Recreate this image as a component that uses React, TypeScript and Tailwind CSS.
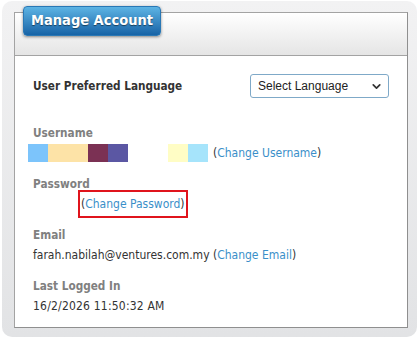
import { ChevronDown } from "lucide-react";

const blocks = [
  { w: "w-[20px]", c: "bg-[#7cc4fb]" },
  { w: "w-[40px]", c: "bg-[#fde3a7]" },
  { w: "w-[20px]", c: "bg-[#7b3154]" },
  { w: "w-[20px]", c: "bg-[#5b57a3]" },
  { w: "w-[40px]", c: "bg-white" },
  { w: "w-[20px]", c: "bg-[#fffdc5]" },
  { w: "w-[20px]", c: "bg-[#a6e4fb]" },
];

function Label({ children }: { children: React.ReactNode }) {
  return <div className="h-[20px] leading-[20px] text-[11.7px] font-bold text-[#808080]">{children}</div>;
}

function Link({ children }: { children: React.ReactNode }) {
  return <span className="text-[#3a8fc9]">{children}</span>;
}

export default function App() {
  return (
    <div className="w-[419px] h-[338px] bg-white pt-[1px] pl-[2px] pr-[2px] pb-[1px]" style={{ fontFamily: '"DejaVu Sans Condensed", "DejaVu Sans", Verdana, sans-serif' }}>
      <div className="h-full rounded-[10px] bg-gradient-to-b from-[#f2f2f3] to-[#e2e3e5] pt-[11px] pl-[12px] pr-[9px] pb-[9px]">
        <div className="h-full flex flex-col border border-[#a3a3a3] border-r-[#8f8f8f] border-b-[#8f8f8f] bg-white">
          <div className="h-[43px] shrink-0 bg-gradient-to-b from-white to-[#e5e5e5] border-b border-[#a3a3a3]">
            <div className="ml-[8px] -mt-[7px] w-[138px] h-[30px] rounded-[4px] border border-[#2a78b5] bg-gradient-to-b from-[#5db4e4] to-[#1663a6] shadow-[0_1px_3px_rgba(0,0,0,0.45)] flex items-center justify-center whitespace-nowrap text-white font-bold text-[14.5px] [text-shadow:0_1px_1px_rgba(0,0,0,0.5)]">
              Manage Account
            </div>
          </div>

          <div className="flex-1 pl-[18px] pr-[18px] pt-[18px] text-[12px] text-[#333]">
            <div className="h-[24px] flex items-center justify-between">
              <span className="mt-[2px] text-[11.7px] font-bold text-[#333]">User Preferred Language</span>
              <div className="w-[139px] h-[24px] rounded-[3px] border border-[#7fa9c8] flex items-center justify-between pl-[7px] pr-[5px] text-[12px] text-[#222]" style={{ fontFamily: '"Liberation Sans", Arial, sans-serif' }}>
                <span>Select Language</span>
                <ChevronDown size={13} strokeWidth={3.2} className="text-[#333]" />
              </div>
            </div>

            <div className="mt-[25px]">
              <Label>Username</Label>
              <div className="h-[20px] flex items-center -ml-[5px]">
                {blocks.map((b, i) => (
                  <div key={i} className={`${b.w} ${b.c} h-[18px]`} />
                ))}
                <span className="ml-[5px] leading-[20px]">
                  (<Link>Change Username</Link>)
                </span>
              </div>
            </div>

            <div className="mt-[11px]">
              <Label>Password</Label>
              <div className="h-[20px] flex items-center">
                <span className="ml-[47px] inline-block h-[24px] leading-[24px] px-[1px] outline-2 outline-[#e0141c]">
                  (<Link>Change Password</Link>)
                </span>
              </div>
            </div>

            <div className="mt-[11px]">
              <Label>Email</Label>
              <div className="h-[20px] leading-[20px]">
                farah.nabilah@ventures.com.my (<Link>Change Email</Link>)
              </div>
            </div>

            <div className="mt-[11px]">
              <Label>Last Logged In</Label>
              <div className="h-[20px] leading-[20px] tracking-[0.2px]">16/2/2026 11:50:32 AM</div>
            </div>
          </div>
        </div>
      </div>
    </div>
  );
}
